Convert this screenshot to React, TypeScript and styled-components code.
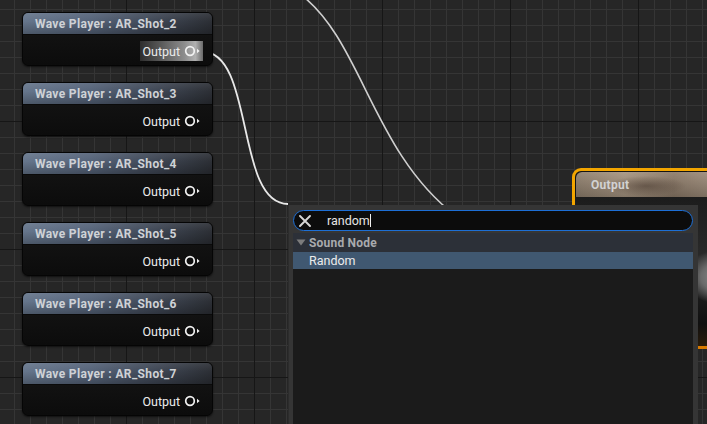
import React from "react";
import styled, { createGlobalStyle } from "styled-components";

const GlobalStyle = createGlobalStyle`
  html, body { margin: 0; padding: 0; background: #262626; overflow: hidden; }
  * { box-sizing: border-box; }
`;

const Canvas = styled.div`
  position: relative;
  width: 707px;
  height: 424px;
  overflow: hidden;
  font-family: Roboto, "Liberation Sans", sans-serif;
  background-color: #262626;
  background-image:
    linear-gradient(90deg, #161616 1px, transparent 1px),
    linear-gradient(0deg, #161616 1px, transparent 1px),
    linear-gradient(90deg, #353535 1px, transparent 1px),
    linear-gradient(0deg, #353535 1px, transparent 1px);
  background-size: 128px 128px, 128px 128px, 16px 16px, 16px 16px;
  background-position: 126px 0, 0 122px, 14px 0, 0 10px;
`;

const WireLayer = styled.svg`
  position: absolute;
  left: 0;
  top: 0;
  width: 707px;
  height: 424px;
  pointer-events: none;
`;

const NodeColumn = styled.div`
  position: relative;
  display: flex;
  flex-direction: column;
  gap: 16px;
  padding: 12px 0 0 22px;
`;

const WaveNode = styled.div`
  width: 191px;
  height: 54px;
  border-radius: 6px;
  border: 1px solid #050505;
  background: linear-gradient(180deg, #181818 0%, #111 50%, #0c0c0c 100%);
  box-shadow: 0 1px 2px rgba(0, 0, 0, 0.6);
  display: flex;
  flex-direction: column;
  overflow: hidden;
`;

const WaveHeader = styled.div`
  height: 22px;
  flex: none;
  display: flex;
  align-items: center;
  padding-left: 12px;
  background:
    linear-gradient(180deg, rgba(255, 255, 255, 0.08) 0%, rgba(0, 0, 0, 0) 40%, rgba(0, 0, 0, 0.25) 100%),
    linear-gradient(90deg, #66768c 0%, #56647a 35%, #3f4755 70%, #2c2f35 100%);
  border-bottom: 1px solid #0a0a0a;
`;

const WaveTitle = styled.span`
  color: #cfd2d6;
  font-weight: 700;
  font-size: 12px;
  letter-spacing: 0.35px;
`;

const WaveBody = styled.div`
  flex: 1;
  display: flex;
  align-items: center;
  justify-content: flex-end;
  padding: 2px 11px 0 0;
`;

const PinRow = styled.div<{ $hot?: boolean }>`
  display: flex;
  align-items: center;
  height: 20px;
  padding-left: 2px;
  margin-right: ${(p) => (p.$hot ? "-2px" : "0")};
  padding-right: ${(p) => (p.$hot ? "2px" : "0")};
  background: ${(p) =>
    p.$hot
      ? "linear-gradient(90deg, #2e2e2e 0%, #555 30%, #8c8c8c 70%, #b0b0b0 88%, #6a6a6a 100%)"
      : "transparent"};
`;

const PinLabel = styled.span`
  color: #ececec;
  font-size: 12.5px;
  margin-right: 4px;
`;

const Pin = () => (
  <svg width="17" height="12" viewBox="0 0 17 12">
    <circle cx="6" cy="6" r="4.3" fill="none" stroke="#f2f2f2" strokeWidth="1.7" />
    <path d="M13 3.8 L15.6 6 L13 8.2 Z" fill="#f2f2f2" />
  </svg>
);

const OutputNode = styled.div`
  position: absolute;
  left: 572px;
  top: 168px;
  width: 170px;
  height: 181px;
  border-radius: 9px;
  border: 3px solid #f2a500;
  border-bottom-color: #d97a00;
  background: #141414;
  overflow: hidden;
  display: flex;
  flex-direction: column;
`;

const OutputHeader = styled.div`
  height: 25px;
  flex: none;
  margin: 1px 0 0 1px;
  border-radius: 6px 0 0 0;
  display: flex;
  align-items: center;
  padding-left: 15px;
  background:
    radial-gradient(ellipse 40px 10px at 70px 14px, rgba(70, 55, 45, 0.55), transparent),
    linear-gradient(180deg, rgba(255, 255, 255, 0.08), rgba(0, 0, 0, 0.2)),
    linear-gradient(90deg, #8f7f6d 0%, #a69480 30%, #8c7a68 60%, #a08e7c 85%, #6a5c4f 100%);
`;

const OutputTitle = styled.span`
  color: #d2d2d2;
  font-weight: 700;
  font-size: 12px;
  letter-spacing: 0.3px;
`;

const OutputBody = styled.div`
  flex: 1;
  position: relative;
  background:
    radial-gradient(ellipse 60px 40px at 150px 80px, #9a9a9a 0%, #6a6a6a 40%, transparent 70%),
    linear-gradient(180deg, #1c1c1c 0%, #2a2a2a 40%, #101010 85%, #2a1c0c 100%);
`;

const SearchPanel = styled.div`
  position: absolute;
  left: 288px;
  top: 205px;
  width: 410px;
  height: 240px;
  background: #353535;
  border-left: 1px solid #2c2c2c;
  padding: 5px 5px 0 4px;
  display: flex;
  flex-direction: column;
  gap: 2px;
`;

const SearchBox = styled.div`
  height: 21px;
  flex: none;
  border-radius: 11px;
  border: 1px solid #1d6fd6;
  background: #0c0c0c;
  display: flex;
  align-items: center;
  padding-left: 5px;
`;

const ClearIcon = styled.svg`
  width: 12px;
  height: 12px;
  flex: none;
`;

const SearchText = styled.span`
  margin-left: 16px;
  color: #e6e6e6;
  font-size: 12.5px;
  display: flex;
  align-items: center;
`;

const Caret = styled.span`
  display: inline-block;
  width: 1px;
  height: 13px;
  background: #f0f0f0;
  margin-left: 0px;
`;

const ResultList = styled.div`
  flex: 1;
  background: #1b1b1b;
  display: flex;
  flex-direction: column;
`;

const CategoryRow = styled.div`
  height: 19px;
  display: flex;
  align-items: center;
  padding-left: 3px;
  background: #2c3038;
  color: #a9abae;
  font-weight: 700;
  font-size: 12px;
  letter-spacing: 0.2px;
`;

const Arrow = styled.svg`
  width: 10px;
  height: 7px;
  margin-right: 3px;
`;

const ItemRow = styled.div<{ $selected?: boolean }>`
  height: 17px;
  display: flex;
  align-items: center;
  padding-left: 16px;
  background: ${(p) => (p.$selected ? "#405871" : "transparent")};
  color: #ececec;
  font-size: 12.5px;
`;

const shots = ["AR_Shot_2", "AR_Shot_3", "AR_Shot_4", "AR_Shot_5", "AR_Shot_6", "AR_Shot_7"];

export default function App() {
  return (
    <>
      <GlobalStyle />
      <Canvas>
        <WireLayer viewBox="0 0 707 424">
          <path d="M300 -6 C 362 40, 372 152, 456 216" stroke="#cfcfcf" strokeWidth="1.6" fill="none" />
          <path d="M202 51.5 C 255 51.5, 235 204, 288 204" stroke="#e8e8e8" strokeWidth="1.8" fill="none" />
        </WireLayer>
        <NodeColumn>
          {shots.map((s, i) => (
            <WaveNode key={s}>
              <WaveHeader>
                <WaveTitle>Wave Player : {s}</WaveTitle>
              </WaveHeader>
              <WaveBody>
                <PinRow $hot={i === 0}>
                  <PinLabel>Output</PinLabel>
                  <Pin />
                </PinRow>
              </WaveBody>
            </WaveNode>
          ))}
        </NodeColumn>
        <OutputNode>
          <OutputHeader>
            <OutputTitle>Output</OutputTitle>
          </OutputHeader>
          <OutputBody />
        </OutputNode>
        <SearchPanel>
          <SearchBox>
            <ClearIcon viewBox="0 0 12 12">
              <path d="M1 1 L11 11 M11 1 L1 11" stroke="#d6d6d6" strokeWidth="1.9" strokeLinecap="round" />
            </ClearIcon>
            <SearchText>
              random
              <Caret />
            </SearchText>
          </SearchBox>
          <ResultList>
            <CategoryRow>
              <Arrow viewBox="0 0 10 7">
                <path d="M0.5 0.5 L9.5 0.5 L5 6.5 Z" fill="#7c7c7c" />
              </Arrow>
              Sound Node
            </CategoryRow>
            <ItemRow $selected>Random</ItemRow>
          </ResultList>
        </SearchPanel>
      </Canvas>
    </>
  );
}
